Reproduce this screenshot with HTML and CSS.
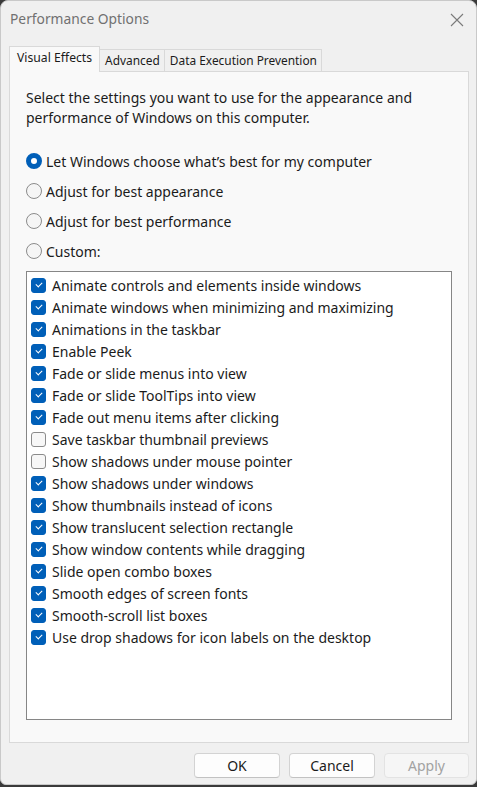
FILE: index.html
```html
<!DOCTYPE html>
<html>
<head>
<meta charset="utf-8">
<link rel="stylesheet" href="styles.css">
</head>
<body>
<div class="window">
  <div class="titlebar">
    <span class="title">Performance Options</span>
    <svg class="close" width="14" height="14" viewBox="0 0 14 14"><path d="M1 1L13 13M13 1L1 13" stroke="#7a7a7a" stroke-width="1.1" fill="none"/></svg>
  </div>
  <div class="tabs">
    <div class="tab active">Visual Effects</div>
    <div class="tab">Advanced</div>
    <div class="tab">Data Execution Prevention</div>
  </div>
  <div class="panel">
    <p class="intro">Select the settings you want to use for the appearance and performance of Windows on this computer.</p>
    <div class="radios">
      <div class="radio-row"><span class="radio on"></span>Let Windows choose what’s best for my computer</div>
      <div class="radio-row"><span class="radio"></span>Adjust for best appearance</div>
      <div class="radio-row"><span class="radio"></span>Adjust for best performance</div>
      <div class="radio-row"><span class="radio"></span>Custom:</div>
    </div>
    <div class="listbox">
      <div class="item"><span class="cb on"></span>Animate controls and elements inside windows</div>
      <div class="item"><span class="cb on"></span>Animate windows when minimizing and maximizing</div>
      <div class="item"><span class="cb on"></span>Animations in the taskbar</div>
      <div class="item"><span class="cb on"></span>Enable Peek</div>
      <div class="item"><span class="cb on"></span>Fade or slide menus into view</div>
      <div class="item"><span class="cb on"></span>Fade or slide ToolTips into view</div>
      <div class="item"><span class="cb on"></span>Fade out menu items after clicking</div>
      <div class="item"><span class="cb"></span>Save taskbar thumbnail previews</div>
      <div class="item"><span class="cb"></span>Show shadows under mouse pointer</div>
      <div class="item"><span class="cb on"></span>Show shadows under windows</div>
      <div class="item"><span class="cb on"></span>Show thumbnails instead of icons</div>
      <div class="item"><span class="cb on"></span>Show translucent selection rectangle</div>
      <div class="item"><span class="cb on"></span>Show window contents while dragging</div>
      <div class="item"><span class="cb on"></span>Slide open combo boxes</div>
      <div class="item"><span class="cb on"></span>Smooth edges of screen fonts</div>
      <div class="item"><span class="cb on"></span>Smooth-scroll list boxes</div>
      <div class="item"><span class="cb on"></span>Use drop shadows for icon labels on the desktop</div>
    </div>
  </div>
  <div class="buttons">
    <button class="btn">OK</button>
    <button class="btn">Cancel</button>
    <button class="btn disabled">Apply</button>
  </div>
</div>
</body>
</html>
```
FILE: styles.css
```css
* { box-sizing: border-box; }
html, body { margin: 0; padding: 0; }
body {
  width: 477px;
  height: 787px;
  background: #3a3a3a;
  font-family: "Noto Sans", "Liberation Sans", sans-serif;
  font-size: 14px;
  color: #1b1b1b;
  overflow: hidden;
}
.window {
  width: 477px;
  height: 785px;
  background: #f0f0f0;
  border: 1px solid #c9c9c9;
  border-radius: 8px 8px 6px 6px;
  padding: 0 7px 0 8px;
  display: flex;
  flex-direction: column;
}
.titlebar {
  height: 45px;
  display: flex;
  align-items: flex-start;
  justify-content: space-between;
  padding: 8px 5px 0 1px;
}
.title {
  font-size: 13.8px;
  color: #717171;
  line-height: 20px;
}
.close { margin-top: 4px; }
.tabs {
  display: flex;
  align-items: flex-end;
  height: 25px;
  position: relative;
  z-index: 1;
}
.tab {
  height: 22px;
  padding: 0 4px 0 5px;
  border: 1px solid #d9d9d9;
  border-bottom: none;
  background: #f0f0f0;
  font-size: 11.9px;
  line-height: 21px;
  margin-left: -1px;
}
.tab:first-child { margin-left: 0; }
.tab.active {
  background: #f9f9f9;
  padding: 0 7px;
  font-size: 12.2px;
  line-height: 22px;
  margin-bottom: -1px;
  height: 26px;
}
.panel {
  width: 460px;
  height: 672px;
  background: #f9f9f9;
  border: 1px solid #d9d9d9;
  padding: 16px 15px 0 16px;
}
.intro {
  margin: 0;
  line-height: 20px;
  width: 420px;
}
.radios {
  margin-top: 18px;
  display: flex;
  flex-direction: column;
}
.radio-row {
  height: 30px;
  display: flex;
  align-items: center;
}
.radio {
  width: 16px;
  height: 16px;
  border-radius: 50%;
  border: 1px solid #8b8b8b;
  background: #f5f5f5;
  margin-right: 4px;
  flex: none;
}
.radio.on {
  border: 5px solid #005fb8;
  background: #ffffff;
}
.listbox {
  margin-top: 5px;
  width: 426px;
  height: 449px;
  background: #ffffff;
  border: 1px solid #868686;
  padding: 2px 0 0 4px;
}
.item {
  height: 22px;
  display: flex;
  align-items: center;
}
.cb {
  width: 15px;
  height: 15px;
  border-radius: 3px;
  border: 1px solid #8b8b8b;
  background: #f7f7f7;
  margin-right: 6px;
  flex: none;
  position: relative;
}
.cb.on {
  background: #005fb8;
  border-color: #005fb8;
}
.cb.on::after {
  content: "";
  position: absolute;
  left: 3.5px;
  top: 3px;
  width: 5px;
  height: 3px;
  border-left: 1.2px solid #fff;
  border-bottom: 1.2px solid #fff;
  transform: rotate(-45deg);
}
.buttons {
  display: flex;
  justify-content: flex-end;
  gap: 9px;
  margin-top: 10px;
}
.btn {
  width: 86px;
  height: 25px;
  font-family: inherit;
  font-size: 14px;
  color: #1b1b1b;
  background: #fdfdfd;
  border: 1px solid #d3d3d3;
  border-bottom-color: #c2c2c2;
  border-radius: 4px;
  padding: 0;
}
.btn.disabled {
  background: #f6f6f6;
  color: #a2a2a2;
  border-color: #e3e3e3;
  width: 85px;
}
```
